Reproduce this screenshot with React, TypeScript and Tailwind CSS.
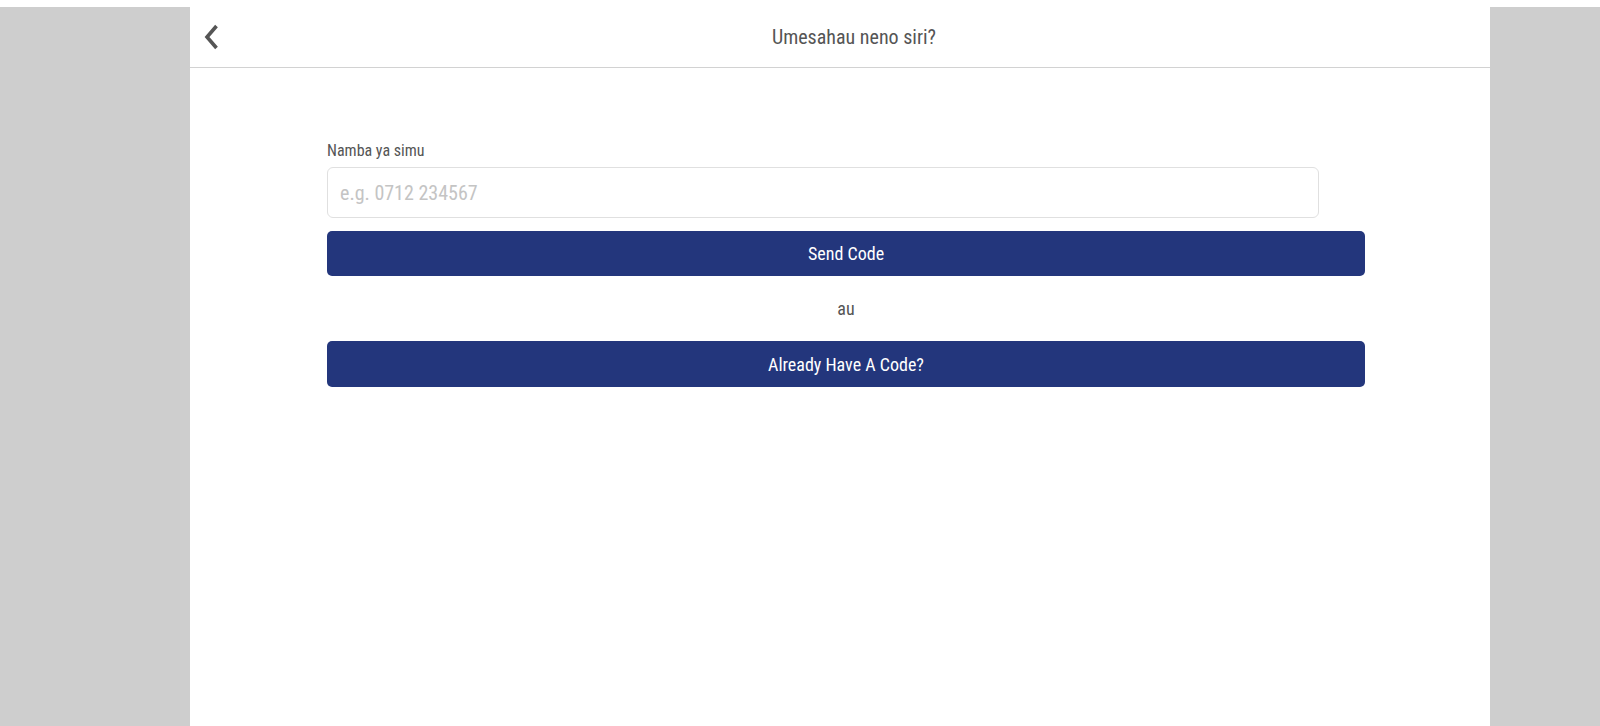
import React from 'react';

const font = "font-['Roboto_Condensed','Roboto',sans-serif] [font-stretch:condensed]";

function BackChevron() {
  return (
    <svg width="15" height="26" viewBox="0 0 15 26" aria-hidden>
      <polyline
        points="12.5,2 3,13 12.5,24"
        fill="none"
        stroke="#555"
        strokeWidth="3.6"
        strokeLinejoin="miter"
      />
    </svg>
  );
}

export default function App() {
  return (
    <div className={`min-h-screen bg-white pt-[7px] ${font}`}>
      <div className="flex h-[719px] bg-[#cecece]">
        <div className="ml-[190px] flex w-[1300px] flex-col bg-white">
          <header className="flex h-[61px] shrink-0 items-center border-b border-[#d2d2d2] px-[14px]">
            <button type="button" className="flex h-7 w-7 items-center" aria-label="Back">
              <BackChevron />
            </button>
            <h1 className="flex-1 text-center text-[20px] text-[#555]">
              Umesahau neno siri?
            </h1>
          </header>

          <div className="ml-[137px] w-[1038px] pt-[73px]">
            <label className="mb-[6px] block text-[16px] leading-5 text-[#555]">
              Namba ya simu
            </label>
            <input
              type="tel"
              placeholder="e.g. 0712 234567"
              className="h-[51px] w-[992px] rounded-md border border-[#e0e0e0] px-3 text-[20px] text-[#333] outline-none placeholder:text-[#c4c4c4]"
            />
            <button
              type="button"
              className="mt-[13px] h-[45px] w-full rounded-[5px] bg-[#23367c] text-[18px] text-white"
            >
              Send Code
            </button>
            <div className="flex h-[65px] items-center justify-center text-[18px] text-[#555]">
              au
            </div>
            <button
              type="button"
              className="h-[46px] w-full rounded-[5px] bg-[#23367c] text-[18px] text-white"
            >
              Already Have A Code?
            </button>
          </div>
        </div>
      </div>
    </div>
  );
}
